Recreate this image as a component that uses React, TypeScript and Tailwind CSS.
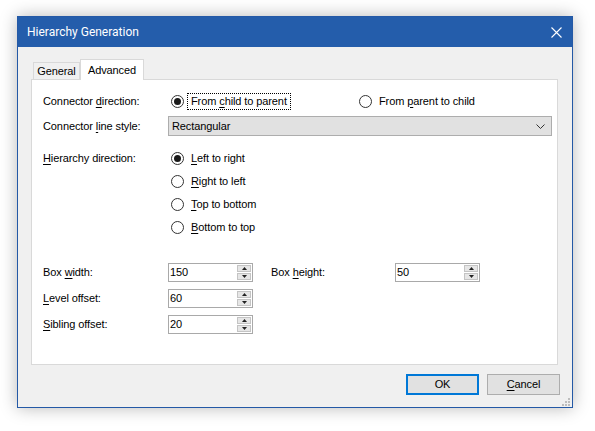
import React from "react";

const font = { fontFamily: '"Liberation Sans", Arial, sans-serif' };
const titleFont = { fontFamily: 'Roboto, "Noto Sans", sans-serif' };

function U({ children }: { children: React.ReactNode }) {
  return <span className="underline underline-offset-[2px] decoration-1">{children}</span>;
}

function Radio({ checked, children, focus }: { checked?: boolean; children: React.ReactNode; focus?: boolean }) {
  return (
    <div className="flex items-center h-[16px]">
      <span className="w-[13px] h-[13px] rounded-full border border-[#333] bg-white flex items-center justify-center shrink-0">
        {checked && <span className="w-[7px] h-[7px] rounded-full bg-[#1a1a1a]" />}
      </span>
      <span
        className={
          "ml-[4px] px-[3px] h-[15px] flex items-center leading-none " +
          (focus ? "outline outline-1 outline-dotted outline-black" : "")
        }
      >
        <span>{children}</span>
      </span>
    </div>
  );
}

function Spin({ value }: { value: string }) {
  return (
    <div className="w-[85px] h-[19px] border border-[#a9a9a9] bg-white flex items-center justify-between pl-[1px] pr-[1px]">
      <span className="leading-none">{value}</span>
      <div className="flex flex-col gap-[1px] w-[14px] h-[15px]">
        <div className="flex-1 bg-[#e6e6e6] border border-[#c4c4c4] flex items-center justify-center">
          <svg width="5" height="3" viewBox="0 0 5 3"><path d="M0 3 L2.5 0 L5 3 Z" fill="#222" /></svg>
        </div>
        <div className="flex-1 bg-[#e6e6e6] border border-[#c4c4c4] flex items-center justify-center">
          <svg width="5" height="3" viewBox="0 0 5 3"><path d="M0 0 L2.5 3 L5 0 Z" fill="#222" /></svg>
        </div>
      </div>
    </div>
  );
}

export default function App() {
  return (
    <div className="w-[595px] h-[431px] bg-white pt-[16px] pl-[17px] text-[11px] tracking-[-0.1px] text-black" style={font}>
      <div className="w-[556px] h-[392px] border border-[#2459a6] bg-[#f0f0f0] flex flex-col shadow-[0_0_16px_rgba(0,0,0,0.28)]">
        {/* title bar */}
        <div className="h-[30px] bg-[#245dab] flex items-center justify-between pl-[9px] pr-[10px] shrink-0">
          <span className="text-white text-[12px] tracking-normal" style={titleFont}>Hierarchy Generation</span>
          <svg width="11" height="11" viewBox="0 0 11 11">
            <path d="M0.5 0.5 L10.5 10.5 M10.5 0.5 L0.5 10.5" stroke="white" strokeWidth="1.1" />
          </svg>
        </div>

        {/* tabs */}
        <div className="pl-[13px] pr-[14px] pt-[12px] flex flex-col">
          <div className="flex items-end h-[20px] pl-[2px] relative z-10">
            <div className="w-[47px] h-[17px] border border-b-0 border-[#d9d9d9] bg-[#f0f0f0] flex items-center justify-center leading-none">
              General
            </div>
            <div className="w-[64px] h-[21px] -mb-[1px] border border-b-0 border-[#d9d9d9] bg-white flex items-center justify-center leading-none">
              Advanced
            </div>
          </div>
          <div className="h-[286px] border border-[#d9d9d9] bg-white pl-[11px] pt-[13px]">
            <div className="flex items-center h-[16px]">
              <span className="w-[128px]">Connector <U>d</U>irection:</span>
              <div className="w-[188px]">
                <Radio checked focus>
                  From <U>c</U>hild to parent
                </Radio>
              </div>
              <Radio>
                From <U>p</U>arent to child
              </Radio>
            </div>

            <div className="flex items-center mt-[7px] h-[20px]">
              <span className="w-[125px]">Connector <U>l</U>ine style:</span>
              <div className="w-[384px] h-[20px] bg-[#e1e1e1] border border-[#adadad] flex items-center justify-between pl-[3px] pr-[6px]">
                <span>Rectangular</span>
                <svg width="9" height="5" viewBox="0 0 9 5">
                  <path d="M0.5 0.5 L4.5 4.5 L8.5 0.5" stroke="#333" fill="none" strokeWidth="1" />
                </svg>
              </div>
            </div>

            <div className="flex mt-[14px]">
              <span className="w-[128px] h-[16px] flex items-center">
                <span>
                  <U>H</U>ierarchy direction:
                </span>
              </span>
              <div className="flex flex-col gap-[7px]">
                <Radio checked>
                  <U>L</U>eft to right
                </Radio>
                <Radio>
                  <U>R</U>ight to left
                </Radio>
                <Radio>
                  <U>T</U>op to bottom
                </Radio>
                <Radio>
                  <U>B</U>ottom to top
                </Radio>
              </div>
            </div>

            <div className="flex items-center mt-[28px] h-[19px]">
              <span className="w-[125px]">Box <U>w</U>idth:</span>
              <Spin value="150" />
              <span className="ml-[18px] w-[124px]">Box <U>h</U>eight:</span>
              <Spin value="50" />
            </div>
            <div className="flex items-center mt-[7px] h-[19px]">
              <span className="w-[125px]"><U>L</U>evel offset:</span>
              <Spin value="60" />
            </div>
            <div className="flex items-center mt-[7px] h-[19px]">
              <span className="w-[125px]"><U>S</U>ibling offset:</span>
              <Spin value="20" />
            </div>
          </div>
        </div>

        {/* buttons */}
        <div className="flex justify-end gap-[8px] pr-[12px] mt-[9px]">
          <button className="w-[73px] h-[21px] bg-[#e1e1e1] border-2 border-[#0078d7] flex items-center justify-center leading-none">
            OK
          </button>
          <button className="w-[73px] h-[21px] bg-[#e1e1e1] border border-[#adadad] flex items-center justify-center leading-none">
            <span><U>C</U>ancel</span>
          </button>
        </div>
        <div className="flex justify-end pr-[2px] mt-auto pb-[1px]">
          <svg width="8" height="8" viewBox="0 0 8 8">
            <rect x="6" y="0" width="2" height="2" fill="#bdbdbd" />
            <rect x="3" y="3" width="2" height="2" fill="#bdbdbd" />
            <rect x="6" y="3" width="2" height="2" fill="#bdbdbd" />
            <rect x="0" y="6" width="2" height="2" fill="#bdbdbd" />
            <rect x="3" y="6" width="2" height="2" fill="#bdbdbd" />
            <rect x="6" y="6" width="2" height="2" fill="#bdbdbd" />
          </svg>
        </div>
      </div>
    </div>
  );
}
